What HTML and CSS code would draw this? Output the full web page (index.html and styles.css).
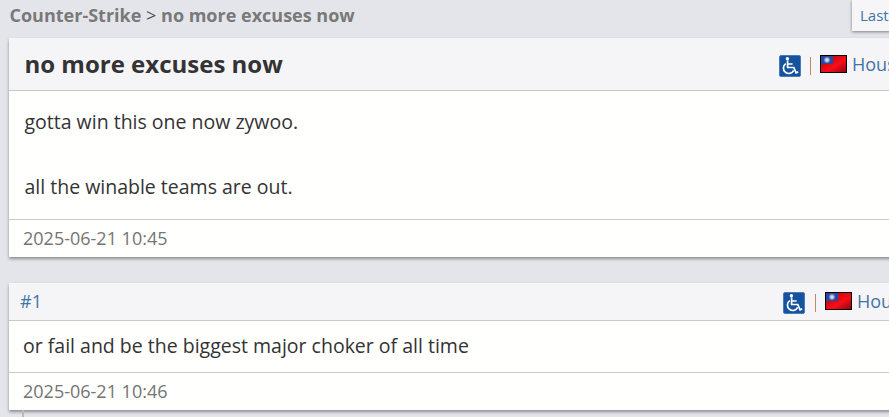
FILE: index.html
```
<!DOCTYPE html>
<html lang="en">
<head>
    <meta charset="UTF-8">
    <meta name="viewport" content="width=device-width, initial-scale=1.0">
    <title>no more excuses now</title>
    <link rel="stylesheet" href="styles.css">
</head>
<body>
    <svg class="defs" width="0" height="0">
        <defs>
            <linearGradient id="flagShade" x1="0" y1="0" x2="1" y2="1">
                <stop offset="0" stop-color="#b80810"/>
                <stop offset="0.35" stop-color="#d40a12"/>
                <stop offset="0.6" stop-color="#fa0d18"/>
                <stop offset="1" stop-color="#90060b"/>
            </linearGradient>
            <radialGradient id="flagSun">
                <stop offset="0.2" stop-color="#dcdde8"/>
                <stop offset="0.6" stop-color="#8592c4"/>
                <stop offset="1" stop-color="#2f4fae" stop-opacity="0"/>
            </radialGradient>
        </defs>
        <symbol id="wheelchair" viewBox="0 0 22 22">
            <rect x="0.5" y="0.5" width="21" height="21" rx="1.5" fill="#15539f" stroke="#4a7ab8"/>
            <circle cx="8.4" cy="3.8" r="1.7" fill="#fff"/>
            <path d="M8.6 5.5v7h6.2l2.3 5.3 2.1-.9M8.8 9h4.8" fill="none" stroke="#fff" stroke-width="1.7"/>
            <path d="M6.8 8.6a5.4 5.4 0 1 0 7.9 6.8" fill="none" stroke="#fff" stroke-width="1.7"/>
        </symbol>
        <symbol id="flag" viewBox="0 0 27 18">
            <rect width="27" height="18" fill="#000"/>
            <rect x="1" y="1" width="25" height="16" fill="url(#flagShade)"/>
            <rect x="1" y="1" width="12" height="8" fill="#2448a5"/>
            <circle cx="7" cy="5" r="4" fill="url(#flagSun)"/>
        </symbol>
    </svg>

    <div class="page">
        <div class="top">
            <div class="breadcrumb"><a href="#">Counter-Strike</a> &gt; <a href="#">no more excuses now</a></div>
            <a class="last-link" href="#">Last</a>
        </div>

        <div class="post topic">
            <div class="post-header">
                <h1>no more excuses now</h1>
                <div class="author">
                    <svg class="badge"><use href="#wheelchair"/></svg>
                    <span class="divider"></span>
                    <svg class="flag"><use href="#flag"/></svg>
                    <a href="#">Hous</a>
                </div>
            </div>
            <div class="post-body">
                <p>gotta win this one now zywoo.</p>
                <p>all the winable teams are out.</p>
            </div>
            <div class="post-footer">2025-06-21 10:45</div>
        </div>

        <div class="post reply">
            <div class="post-header">
                <a class="number" href="#">#1</a>
                <div class="author">
                    <svg class="badge"><use href="#wheelchair"/></svg>
                    <span class="divider"></span>
                    <svg class="flag"><use href="#flag"/></svg>
                    <a href="#">Hous</a>
                </div>
            </div>
            <div class="post-body">
                <p>or fail and be the biggest major choker of all time</p>
            </div>
            <div class="post-footer">2025-06-21 10:46</div>
        </div>
        <div class="thread-line"></div>
    </div>
</body>
</html>
```
FILE: styles.css
```
* {
    box-sizing: border-box;
}
body {
    margin: 0;
    height: 417px;
    overflow: hidden;
    background-color: #e4e5ea;
    font-family: "Open Sans", "Noto Sans", sans-serif;
    font-size: 18px;
    color: #333;
}
a {
    color: #3f74a5;
    text-decoration: none;
}
.defs {
    position: absolute;
}
.page {
    width: 920px;
    padding-left: 9px;
}
.top {
    display: flex;
    justify-content: space-between;
    height: 38px;
}
.breadcrumb {
    padding-left: 0.5px;
    line-height: 30px;
    color: #4c4c4c;
}
.breadcrumb a {
    color: #797979;
    font-weight: 700;
}
.last-link {
    width: 68px;
    height: 31px;
    padding-left: 8px;
    background: #f6f6f9;
    font-size: 15px;
    line-height: 31px;
    box-shadow: 0 1px 3px rgba(0,0,0,0.45);
}
.post {
    background: #fffffe;
    box-shadow: 0 2px 3px rgba(0,0,0,0.38);
}
.post-header {
    display: flex;
    align-items: center;
    justify-content: space-between;
    background: #f5f5f8;
    border-bottom: 1px solid #c8c8c8;
}
.topic .post-header {
    height: 53px;
    padding-left: 15.5px;
}
.reply .post-header {
    height: 38px;
    padding-left: 11px;
}
h1 {
    margin: 0 0 2px;
    font-size: 24px;
    font-weight: 700;
}
.number {
    margin-bottom: 2px;
}
.author {
    display: flex;
    align-items: center;
    width: 141px;
}
.reply .author {
    width: 137px;
    padding-bottom: 1px;
}
.badge {
    width: 22px;
    height: 22px;
    margin-top: 3px;
}
.reply .badge {
    margin-top: 4px;
}
.divider {
    width: 1px;
    height: 18px;
    margin: 3px 9px 0;
    background: #bd8c58;
}
.reply .divider {
    margin: 3px 9px 0 10px;
}
.flag {
    width: 27px;
    height: 18px;
    margin-right: 5px;
}
.post-body {
    font-size: 19.5px;
    line-height: 32px;
}
.post-body p {
    margin: 0;
}
.topic .post-body {
    height: 128px;
    padding: 15px 15.5px;
}
.topic .post-body p + p {
    margin-top: 33px;
}
.reply .post-body {
    height: 51px;
    padding: 9px 14px;
}
.post-footer {
    height: 38px;
    padding-left: 14px;
    border-top: 1px solid #c8c8c8;
    line-height: 37px;
    color: #747474;
}
.reply {
    margin-top: 26px;
}
.thread-line {
    width: 2px;
    height: 7px;
    margin-left: 13px;
    background: #b9b9bc;
}
```
